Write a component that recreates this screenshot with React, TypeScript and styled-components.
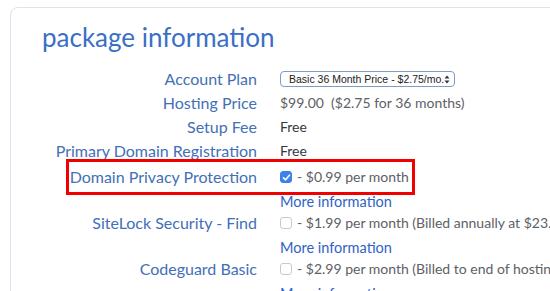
import React from 'react';
import styled, { createGlobalStyle } from 'styled-components';

const GlobalStyle = createGlobalStyle`
  body {
    margin: 0;
    background: #ffffff;
    font-family: Lato, "Open Sans", sans-serif;
  }
`;

const Page = styled.div`
  width: 550px;
  height: 291px;
  overflow: hidden;
  padding: 7px 0 0 10px;
  box-sizing: border-box;
`;

const Card = styled.div`
  position: relative;
  width: 600px;
  height: 340px;
  border: 1px solid #dbe4ee;
  border-radius: 8px;
  box-sizing: border-box;
`;

const Title = styled.h2`
  margin: 0;
  padding: 11px 0 0 31px;
  font-size: 26px;
  font-weight: 400;
  line-height: 36px;
  color: #3b6fc6;
`;

const Fields = styled.div`
  display: flex;
  flex-direction: column;
  margin-top: 12px;
`;

const Addons = styled.div`
  display: flex;
  flex-direction: column;
  margin-top: 3px;
`;

const Row = styled.div<{ $line?: number }>`
  display: grid;
  grid-template-columns: 246px 1fr;
  column-gap: 23px;
  align-items: start;
  line-height: ${(p) => p.$line ?? 24}px;
`;

const Label = styled.div`
  text-align: right;
  font-size: 16px;
  color: #4270b6;
  white-space: nowrap;
`;

const Value = styled.div`
  display: flex;
  flex-direction: column;
  font-size: 14px;
  color: #5d6166;
  white-space: nowrap;
`;

const Line = styled.div<{ $dark?: boolean }>`
  display: flex;
  align-items: center;
  color: ${(p) => (p.$dark ? '#35393d' : '#5d6166')};
`;

const Select = styled.div`
  display: flex;
  align-items: center;
  justify-content: space-between;
  width: 175px;
  height: 16px;
  margin-top: 4px;
  padding: 0 5px 0 8px;
  box-sizing: border-box;
  border: 1px solid #7d9cc8;
  border-radius: 4px;
  font-family: "Liberation Sans", Arial, sans-serif;
  font-size: 10.5px;
  line-height: 14px;
  color: #222;

  svg {
    flex-shrink: 0;
  }
`;

const Box = styled.span<{ $checked?: boolean }>`
  display: inline-flex;
  align-items: center;
  justify-content: center;
  width: 12px;
  height: 12px;
  margin-right: 5px;
  box-sizing: border-box;
  border-radius: 3px;
  border: 1px solid ${(p) => (p.$checked ? '#3b7fe8' : '#c9c9c9')};
  background: ${(p) => (p.$checked ? '#3b82ea' : '#ffffff')};
`;

const MoreLink = styled.a`
  display: block;
  margin-top: 4px;
  line-height: 20px;
  font-size: 14.5px;
  color: #2f63c6;
  text-decoration: none;
`;

const Highlight = styled.div`
  position: absolute;
  left: 55px;
  top: 151px;
  width: 349px;
  height: 36px;
  border: 3px solid #f00000;
  box-sizing: border-box;
  pointer-events: none;
`;

const Arrows = () => (
  <svg width="6" height="9" viewBox="0 0 6 9">
    <path d="M3 0.5 L5.5 3.5 H0.5 Z M3 8.5 L5.5 5.5 H0.5 Z" fill="#333" />
  </svg>
);

const Check = () => (
  <svg width="9" height="9" viewBox="0 0 9 9">
    <path d="M1.5 4.8 L3.6 6.8 L7.5 2.2" stroke="#fff" strokeWidth="1.6" fill="none" strokeLinecap="round" strokeLinejoin="round" />
  </svg>
);

interface Addon {
  label: string;
  price: string;
  checked?: boolean;
}

const addons: Addon[] = [
  { label: 'Domain Privacy Protection', price: '- $0.99 per month', checked: true },
  { label: 'SiteLock Security - Find', price: '- $1.99 per month (Billed annually at $23.88)' },
  { label: 'Codeguard Basic', price: '- $2.99 per month (Billed to end of hosting term)' },
];

const App = () => {
  return (
    <Page>
      <GlobalStyle />
      <Card>
        <Title>package information</Title>
        <Fields>
          <Row>
            <Label>Account Plan</Label>
            <Value>
              <Select>
                <span>Basic 36 Month Price - $2.75/mo.</span>
                <Arrows />
              </Select>
            </Value>
          </Row>
          <Row>
            <Label>Hosting Price</Label>
            <Value>
              <Line>$99.00&nbsp;&nbsp;($2.75 for 36 months)</Line>
            </Value>
          </Row>
          <Row>
            <Label>Setup Fee</Label>
            <Value>
              <Line $dark>Free</Line>
            </Value>
          </Row>
          <Row>
            <Label>Primary Domain Registration</Label>
            <Value>
              <Line $dark>Free</Line>
            </Value>
          </Row>
          <Addons>
            {addons.map((a) => (
              <Row key={a.label} $line={22}>
                <Label>{a.label}</Label>
                <Value>
                  <Line>
                    <Box $checked={a.checked}>{a.checked && <Check />}</Box>
                    {a.price}
                  </Line>
                  <MoreLink href="#">More information</MoreLink>
                </Value>
              </Row>
            ))}
          </Addons>
        </Fields>
        <Highlight />
      </Card>
    </Page>
  );
};

export default App;
